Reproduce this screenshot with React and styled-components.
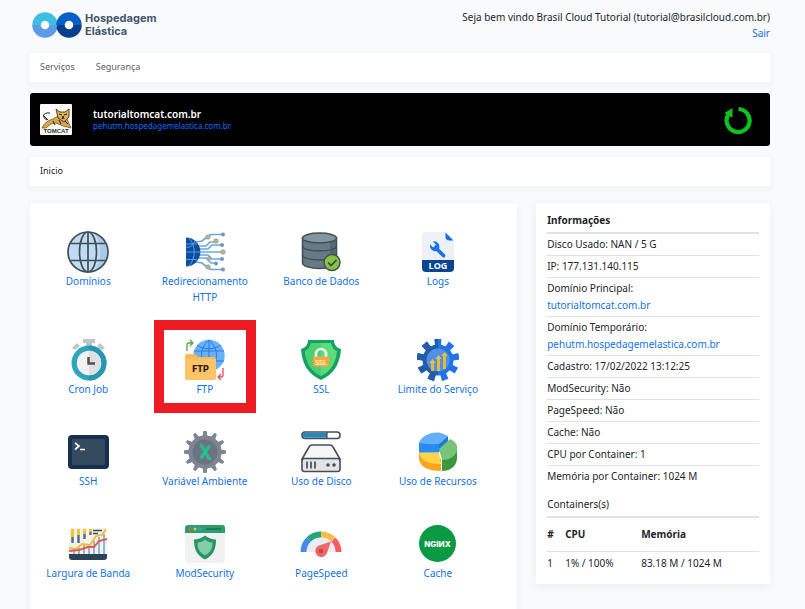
import React from 'react';
import styled, { createGlobalStyle } from 'styled-components';

const GlobalStyle = createGlobalStyle`
	* {
		box-sizing: border-box;
	}

	html {
		scrollbar-width: none;
	}

	body {
		margin: 0;
		background: #f8fafc;
		color: #212529;
		font-family: "Noto Sans", "Open Sans", sans-serif;
		font-size: 10px;
		line-height: 16px;
	}
`

const Page = styled.div`
	padding: 0 35px 0 30px;
`

const Header = styled.header`
	display: flex;
	justify-content: space-between;
	height: 53px;
	padding-top: 9px;
`

const Brand = styled.a`
	display: flex;
	gap: 3px;
	padding-left: 2px;
	color: #44566c;
	font-family: Inter, sans-serif;
	font-size: 11px;
	font-weight: 700;
	line-height: 13px;
	text-decoration: none;
`

const BrandName = styled.span`
	display: flex;
	flex-direction: column;
	padding-top: 3px;
`

const Welcome = styled.div`
	text-align: right;
`

const TextLink = styled.a`
	color: #1272e4;
	text-decoration: none;
`

const Bar = styled.nav`
	display: flex;
	align-items: center;
	gap: 21px;
	height: 29px;
	margin-bottom: 11px;
	padding: 0 10px 2px;
	background: #fff;
	border-radius: 2px;
	box-shadow: 0 2px 8px rgba(0, 0, 0, 0.05);
	font-size: 9px;
`

const BarLink = styled.a`
	color: ${props => props.$current ? '#212529' : '#5c6066'};
	text-decoration: none;
`

const SiteBar = styled.section`
	display: flex;
	align-items: center;
	height: 53px;
	margin-bottom: 11px;
	padding: 0 17px 0 10px;
	background: #000;
	border-radius: 3px;
`

const SiteNames = styled.div`
	display: flex;
	flex: 1;
	flex-direction: column;
	margin-left: 20px;
	line-height: 12px;
`

const SiteTitle = styled.strong`
	color: #fff;
	font-size: 10px;
	font-weight: 600;
`

const SiteLink = styled.a`
	color: #0a6cff;
	font-size: 8px;
	text-decoration: none;
`

const ReloadButton = styled.button`
	display: flex;
	padding: 0;
	border: 0;
	background: none;
	cursor: pointer;
`

const Columns = styled.main`
	display: grid;
	grid-template-columns: minmax(0, 25fr) minmax(0, 12fr);
	align-items: start;
	gap: 19px;
	padding-top: 6px;
`

const Card = styled.section`
	background: #fff;
	border-radius: 2px;
	box-shadow: 0 2px 8px rgba(0, 0, 0, 0.06);
`

const ToolGrid = styled(Card)`
	display: grid;
	grid-template-columns: repeat(4, minmax(0, 1fr));
	row-gap: 19px;
	padding: 19px 21px 38px 0;
`

const Tool = styled.a`
	position: relative;
	display: flex;
	flex-direction: column;
	align-items: center;
	padding: 9px 12px 6px;
	color: #1272e4;
	text-align: center;
	text-decoration: none;

	&::after {
		content: "";
		display: ${props => props.$marked ? 'block' : 'none'};
		position: absolute;
		inset: -10px 7px;
		border: 10px solid #ed1c24;
	}
`

const InfoCard = styled(Card)`
	padding: 9px 11px 10px;
`

const InfoTitle = styled.h2`
	margin: 0;
	padding-bottom: 4px;
	border-bottom: 2px solid #dee2e6;
	font-size: 10px;
	font-weight: ${props => props.$light ? 400 : 700};
`

const InfoList = styled.ul`
	margin: 0 0 9px;
	padding: 0;
	list-style: none;
`

const InfoRow = styled.li`
	padding: 2px 0 3px;
	border-bottom: 1px solid #dee2e6;

	&:last-child {
		border-bottom: 0;
	}
`

const InfoLink = styled(TextLink)`
	display: block;
	margin-top: 1px;
`

const Containers = styled.table`
	width: 100%;
	border-collapse: collapse;
	text-align: left;

	th {
		height: 33px;
		padding: 0;
		border-bottom: 1px solid #dee2e6;
		font-weight: 700;
	}

	td {
		height: 23px;
		padding: 0;
	}
`

const ColNumber = styled.col`
	width: 18px;
`

const ColCpu = styled.col`
	width: 76px;
`

const Icon = ({ children }) => (
	<svg width="42" height="42" viewBox="0 0 42 42" aria-hidden="true">{children}</svg>
)

// gear outline built from a number of teeth around the centre
const gearPath = (teeth, outer, inner, top, foot) => {
	const points = []
	for (let i = 0; i < teeth; i++) {
		const a = (i / teeth) * Math.PI * 2 - Math.PI / 2
		const add = (r, d) => points.push(`${(21 + r * Math.cos(a + d)).toFixed(2)},${(21 + r * Math.sin(a + d)).toFixed(2)}`)
		add(inner, -foot)
		add(outer, -top)
		add(outer, top)
		add(inner, foot)
	}
	return points.join(' ')
}

const GlobeIcon = () => (
	<Icon>
		<circle cx="21" cy="21" r="20" fill="#bfdcf5" />
		<path d="M27 2a20 20 0 0 1 0 38c8-9 9-27 0-38z" fill="#a4cbe9" />
		<g fill="none" stroke="#454d55" strokeWidth="1.7">
			<circle cx="21" cy="21" r="20" />
			<ellipse cx="21" cy="21" rx="8.5" ry="20" />
			<path d="M21 1v40M4 12.5h34M4 29.5h34" />
		</g>
	</Icon>
)

const RedirectIcon = () => (
	<Icon>
		<path d="M2 6.5a14.5 14.5 0 0 1 0 29z" fill="#0b4da2" />
		<path d="M2 13h11M2 21h14.5M2 28.5h11M5 7c7 8 7 20 0 28M2 16c4 1 7-1 9-7" fill="none" stroke="#5f9bdb" strokeWidth="1" />
		<path d="M12 11l6-1 5-4 4-2.5h12M15 15h7l4-4h6M16 18h8l4-4h9M17 21h22M16 24h8l4 4h9M15 27h7l5 5h5M12 31l6 1 5 4 4 2.5h12" fill="none" stroke="#6ba6e3" strokeWidth="1.7" />
		<g fill="#6c98c4">
			<circle cx="39" cy="3.5" r="2" /><circle cx="38" cy="14" r="2" /><circle cx="38" cy="28" r="2" />
			<circle cx="32" cy="32.5" r="2" /><circle cx="39" cy="38.5" r="2" />
		</g>
		<g fill="#d1b45c" stroke="#7c9fc0" strokeWidth=".8">
			<circle cx="24" cy="6" r="2.2" /><circle cx="32" cy="10" r="2.2" /><circle cx="39" cy="21" r="2.2" />
			<circle cx="24" cy="36" r="2.2" /><circle cx="25" cy="27.5" r="1.8" />
		</g>
	</Icon>
)

const DatabaseIcon = () => (
	<Icon>
		<path d="M2.5 7v25c0 3 7.5 5.5 17 5.5S36.5 35 36.5 32V7z" fill="#657986" stroke="#444e57" strokeWidth="1.5" />
		<path d="M30 11v24c4-1 6-2 6-4V8z" fill="#536773" />
		<ellipse cx="19.5" cy="7" rx="17" ry="5" fill="#8296a1" stroke="#444e57" strokeWidth="1.5" />
		<path d="M2.5 15c0 3 7.5 5 17 5s17-2 17-5M2.5 24c0 3 7.5 5 17 5s17-2 17-5" fill="none" stroke="#444e57" strokeWidth="1.5" />
		<circle cx="32" cy="31.5" r="8" fill="#84c441" stroke="#444e57" strokeWidth="1.5" />
		<path d="M28 31.5l3 3 5.5-5.5" fill="none" stroke="#39444e" strokeWidth="1.7" />
	</Icon>
)

const LogIcon = () => (
	<Icon>
		<path d="M9 1h19l9 9v19H5V5a4 4 0 0 1 4-4z" fill="#edf0f4" />
		<path d="M28.5 1.5l8 8h-4a4 4 0 0 1-4-4z" fill="#176ee5" />
		<path d="M5 29h32v8a4 4 0 0 1-4 4H9a4 4 0 0 1-4-4z" fill="#0b4591" />
		<path d="M16 10.5a5.2 5.2 0 0 1 6 7l6 6c1.5 2-1 4-2.6 2.5l-6-6a5.2 5.2 0 0 1-6.2-6.5l3 3 2.7-2.7z" fill="#1673ea" />
		<text x="21" y="38" fill="#fff" fontFamily="Open Sans, sans-serif" fontSize="9" fontWeight="700" textAnchor="middle">LOG</text>
	</Icon>
)

const ClockIcon = () => (
	<Icon>
		<path d="M16 0h12v4h-3v5h-6V4h-3zM5 9l5-5 3 3-5 4zM38 9l-5-5-3 3 5 4z" fill="#bfc4c9" />
		<circle cx="22" cy="24" r="17.5" fill="#2fa5bd" />
		<path d="M22 6.5a17.5 17.5 0 0 1 0 35z" fill="#2797b0" />
		<circle cx="22" cy="24" r="12.2" fill="#f0f2f4" />
		<path d="M22 11.8a12.2 12.2 0 0 1 0 24.4z" fill="#dde1e5" />
		<path d="M21.5 18v6.5H28" fill="none" stroke="#5c4b43" strokeWidth="2.5" />
	</Icon>
)

const FtpIcon = () => (
	<Icon>
		<circle cx="25" cy="16.5" r="15.7" fill="#67b1fb" />
		<path d="M25 1v31M10 12h30M10 22h30M25 1c-10 8-10 23 0 31M25 1c10 8 10 23 0 31M13 6c7 5 17 5 24 0" fill="none" stroke="#2c7bd7" strokeWidth="1" />
		<path d="M1 17q0-2 2-2h8l3 3h15q3 0 3 3v17q0 3-3 3H4q-3 0-3-3z" fill="#fdba59" />
		<path d="M1 20h31v18q0 3-3 3H4q-3 0-3-3z" fill="#ffc468" />
		<text x="16.5" y="32.5" fill="#26221c" fontFamily="Roboto, sans-serif" fontSize="9" fontWeight="900" textAnchor="middle">FTP</text>
		<path d="M3 12V6q0-2 2-2h3M6 1l3 3-3 3" fill="none" stroke="#5aa451" strokeWidth="1.3" />
		<path d="M39 29v7q0 2-2 2h-3M37 35l-3 3 3 3" fill="none" stroke="#dc5363" strokeWidth="1.3" />
	</Icon>
)

const SslIcon = () => (
	<Icon>
		<path d="M8 1h26c0 5 3 8 7 9-1 15-7 25-20 31C8 35 2 25 1 10c4-1 7-4 7-9z" fill="#15a163" />
		<path d="M11 4h20c1 4 3 7 6 8-1 12-6 20-16 25C11 32 6 24 5 12c3-1 5-4 6-8z" fill="#5ddc7b" />
		<path d="M11 4h10v33C11 32 6 24 5 12c3-1 5-4 6-8z" fill="#4bcf70" />
		<path d="M16 19v-4a5 5 0 0 1 10 0v4" fill="none" stroke="#f1fff4" strokeWidth="2.7" />
		<rect x="13" y="17.5" width="16" height="10" rx="1" fill="#f7a83c" />
		<text x="21" y="25.5" fill="#fff" fontFamily="Open Sans, sans-serif" fontSize="7" fontWeight="600" textAnchor="middle">SSL</text>
	</Icon>
)

const LimitIcon = () => (
	<Icon>
		<clipPath id="gear-left">
			<rect width="21" height="42" />
		</clipPath>
		<polygon points={gearPath(9, 21.5, 15, 0.16, 0.2)} fill="#2373e8" />
		<g clipPath="url(#gear-left)">
			<polygon points={gearPath(9, 21.5, 15, 0.16, 0.2)} fill="#245bab" />
		</g>
		<path d="M21 5.5a15.5 15.5 0 0 1 0 31z" fill="#2373e8" />
		<path d="M21 5.5a15.5 15.5 0 0 0 0 31z" fill="#245bab" />
		<circle cx="21" cy="21" r="11.5" fill="#4f91e6" />
		<path d="M15.5 32v-9M21.5 32V19M27.5 30V15" stroke="#e5b93a" strokeWidth="3" />
		<path d="M12.5 24l3-4 3 4zM18.5 20l3-4 3 4zM24.5 17l3-4 3 4z" fill="#f3c534" />
	</Icon>
)

const TerminalIcon = () => (
	<Icon>
		<rect y="4" x="1" width="41" height="34" rx="4" fill="#17304f" />
		<rect x="5" y="8" width="33" height="26" rx="1" fill="#35495f" />
		<path d="M8 12l4 3-4 3.5M13 18.5h5" fill="none" stroke="#fff" strokeWidth="1.7" />
	</Icon>
)

const VariableIcon = () => (
	<Icon>
		<polygon points={gearPath(12, 21, 16, 0.05, 0.12)} fill="#7d8493" stroke="#7d8493" strokeLinejoin="round" />
		<circle cx="21" cy="21" r="16.5" fill="#7d8493" />
		<circle cx="21" cy="21" r="12.5" fill="#6c7482" />
		<path d="M16 14.5h1.5l7.5 13h2M25.5 14.5l-9 13" fill="none" stroke="#25be8f" strokeWidth="3.2" />
	</Icon>
)

const DiskIcon = () => (
	<Icon>
		<rect x="2" y="1" width="38" height="6.5" rx="3" fill="#fff" stroke="#484e54" strokeWidth="1.6" />
		<path d="M27 1.8H5a2.2 2.2 0 0 0 0 4.9h22z" fill="#2986bd" />
		<path d="M27 1v6" stroke="#484e54" strokeWidth="1.2" />
		<path d="M12 14h18q2 0 3 2l7 12H2l7-12q1-2 3-2z" fill="#f5f6f7" stroke="#484e54" strokeWidth="1.6" />
		<rect x="2" y="27.5" width="38" height="13" rx="2.5" fill="#e2e5e8" stroke="#484e54" strokeWidth="1.6" />
		<path d="M7 30.5v7M11 30.5v7M15 30.5v7" stroke="#484e54" strokeWidth="1.7" />
		<circle cx="28" cy="34" r="1.8" fill="#484e54" /><circle cx="34" cy="34" r="1.8" fill="#484e54" />
	</Icon>
)

const PieIcon = () => (
	<Icon>
		<path d="M2 22v6c1 8 9 12 22 12V28z" fill="#fba51c" />
		<path d="M2 21l20 1 2 11C12 33 3 30 2 21z" fill="#ffd447" />
		<path d="M2 12C4 5 15 0 24 2l7 3-9 8z" fill="#62b0fa" />
		<path d="M2 12l20 1v8.500H2z" fill="#2a8cf0" />
		<path d="M22 13l9-8v7l-9 9z" fill="#1d78d8" />
		<path d="M25 27c8 0 14-3 15-9v10c-1 8-7 12-15 12z" fill="#3c963f" />
		<path d="M22 18L33 8c7 3 8 8 7 11-2 7-8 10-15 10z" fill="#79c47b" />
	</Icon>
)

const BandwidthIcon = () => (
	<Icon>
		<rect x="2" y="5" width="38" height="31" rx="3" fill="#f3f2ec" />
		<path d="M5.5 6v8M11.5 6v6M17.5 6v5M23.5 6v3" stroke="#f2c52e" strokeWidth="3" />
		<path d="M5.5 14v6M11.5 12v8M17.5 11v5M23.5 9v3" stroke="#51708e" strokeWidth="2.5" />
		<path d="M26 7.5h9M26 10.5h5" stroke="#34495e" strokeWidth="1.6" />
		<path d="M7 26v6M12 25v7M17 22v10M22 22v10M27 18v14M32 14v18M37 11v21" stroke="#79a9c7" strokeWidth="1.6" />
		<path d="M2 31h38v3q0 3-3 3H5q-3 0-3-3z" fill="#2c4257" />
		<path d="M2 25l7 1 6-5 8 1 6-9 6-1 4-6" fill="none" stroke="#efbf2d" strokeWidth="1.9" />
		<path d="M2 28l10-1 9-3h6l5-6 8-2" fill="none" stroke="#e35757" strokeWidth="1.9" />
	</Icon>
)

const ModSecurityIcon = () => (
	<Icon>
		<rect x="1" y="2" width="40" height="38" rx="3" fill="#f0f1f1" />
		<path d="M4 2h34q3 0 3 3v5H1V5q0-3 3-3z" fill="#2ba06e" />
		<circle cx="6" cy="6" r="1.5" fill="#ea5a51" /><circle cx="11" cy="6" r="1.5" fill="#f4c23c" /><circle cx="16" cy="6" r="1.5" fill="#4d9bd5" />
		<path d="M22 6h15" stroke="#187b53" strokeWidth="1.8" />
		<path d="M21 12.5q5 4 11 4c0 10-3 16-11 20-8-4-11-10-11-20q6 0 11-4z" fill="#279664" />
		<path d="M21 16.5q3 3 7.5 3c0 6-2 10-7.5 13-5.5-3-7.5-7-7.5-13q4.5 0 7.5-3z" fill="#86ccaa" />
	</Icon>
)

const SpeedIcon = () => (
	<Icon>
		<path d="M7 29a14 14 0 0 1 28 0z" fill="#e7ecf6" />
		<g fill="none" strokeWidth="6">
			<path d="M3.5 29A17.5 17.5 0 0 1 8.6 16.6" stroke="#4788ec" />
			<path d="M8.6 16.6A17.5 17.5 0 0 1 21 11.5" stroke="#25a678" />
			<path d="M21 11.5a17.5 17.5 0 0 1 12.4 5.1" stroke="#f4bd49" />
			<path d="M33.4 16.6A17.5 17.5 0 0 1 38.5 29" stroke="#f15f61" />
		</g>
		<path d="M31 18.5l-4 11.5a6 6 0 1 1-8-7.5z" fill="#ef6666" />
		<circle cx="21" cy="28" r="2.3" fill="#ca4148" />
	</Icon>
)

const NginxIcon = () => (
	<Icon>
		<circle cx="20.5" cy="20.5" r="18.5" fill="#0a9a43" />
		<text x="20.5" y="23.5" fill="#fff" fontFamily="Inter, sans-serif" fontSize="8" fontWeight="800" textAnchor="middle">NGIИX</text>
	</Icon>
)

const BrandLogo = () => (
	<svg width="50" height="32" viewBox="0 0 50 32" aria-hidden="true">
		<g fill="none" strokeWidth="8.5">
			<path d="M4.5 16a8.5 8.5 0 0 1 17 0" stroke="#3ebde5" />
			<path d="M4.5 16a8.5 8.5 0 0 0 17 0" stroke="#5b9be7" />
			<path d="M28.5 16a8.5 8.5 0 0 1 17 0" stroke="#0660c7" />
			<path d="M28.5 16a8.5 8.5 0 0 0 17 0" stroke="#063f8d" />
		</g>
		<path d="M25 12.5l3-5 3 5-2.5 3.5H24z" fill="#0660c7" />
		<path d="M17.5 16h8L22 24l-5-3z" fill="#5b9be7" />
	</svg>
)

const TomcatLogo = () => (
	<svg width="33" height="33" viewBox="0 0 33 33" aria-hidden="true">
		<rect x="0" y="1" width="32" height="31" rx="1" fill="#fbfbf8" />
		<path d="M2 25q3-7 11-9l5-3 9 3 4 9-8-2-7-3-5 1-5 4z" fill="#dda54b" stroke="#4c3415" strokeWidth=".6" />
		<path d="M16 6l4 3h5l4-3v8l-5 5-6-4z" fill="#d9b25c" stroke="#49351a" strokeWidth=".9" />
		<path d="M19 11l3 1M27 11l-3 1M22 16l1-3 1 3M10 10c-8-1-8 5-3 7M3 12l5 5M13 18l2 4M19 17l2 4M25 18l3 3" fill="none" stroke="#27231d" strokeWidth="1" />
		<text x="16" y="30" fill="#333" fontFamily="Liberation Sans, sans-serif" fontSize="6" fontWeight="700" textAnchor="middle">TOMCAT</text>
	</svg>
)

const ReloadIcon = () => (
	<svg width="30" height="30" viewBox="0 0 30 30" aria-hidden="true">
		<path d="M15.5 4A11.5 11.5 0 1 1 5 10" fill="none" stroke="#0bc51d" strokeWidth="4.2" />
		<path d="M1.5 8L9.5 3v9H8z" fill="#0bc51d" />
	</svg>
)

const tools = [
	{ label: 'Domínios', icon: GlobeIcon },
	{ label: 'Redirecionamento HTTP', icon: RedirectIcon },
	{ label: 'Banco de Dados', icon: DatabaseIcon },
	{ label: 'Logs', icon: LogIcon },
	{ label: 'Cron Job', icon: ClockIcon },
	{ label: 'FTP', icon: FtpIcon, marked: true },
	{ label: 'SSL', icon: SslIcon },
	{ label: 'Limite do Serviço', icon: LimitIcon },
	{ label: 'SSH', icon: TerminalIcon },
	{ label: 'Variável Ambiente', icon: VariableIcon },
	{ label: 'Uso de Disco', icon: DiskIcon },
	{ label: 'Uso de Recursos', icon: PieIcon },
	{ label: 'Largura de Banda', icon: BandwidthIcon },
	{ label: 'ModSecurity', icon: ModSecurityIcon },
	{ label: 'PageSpeed', icon: SpeedIcon },
	{ label: 'Cache', icon: NginxIcon },
]

const info = [
	{ text: 'Disco Usado: NAN / 5 G' },
	{ text: 'IP: 177.131.140.115' },
	{ text: 'Domínio Principal:', link: 'tutorialtomcat.com.br' },
	{ text: 'Domínio Temporário:', link: 'pehutm.hospedagemelastica.com.br' },
	{ text: 'Cadastro: 17/02/2022 13:12:25' },
	{ text: 'ModSecurity: Não' },
	{ text: 'PageSpeed: Não' },
	{ text: 'Cache: Não' },
	{ text: 'CPU por Container: 1' },
	{ text: 'Memória por Container: 1024 M' },
]

const App = () => {
	return (
		<>
			<GlobalStyle />
			<Page>
				<Header>
					<Brand href="#">
						<BrandLogo />
						<BrandName>
							<span>Hospedagem</span>
							<span>Elástica</span>
						</BrandName>
					</Brand>
					<Welcome>
						<div>Seja bem vindo Brasil Cloud Tutorial (tutorial@brasilcloud.com.br)</div>
						<TextLink href="#">Sair</TextLink>
					</Welcome>
				</Header>

				<Bar>
					<BarLink href="#">Serviços</BarLink>
					<BarLink href="#">Segurança</BarLink>
				</Bar>

				<SiteBar>
					<TomcatLogo />
					<SiteNames>
						<SiteTitle>tutorialtomcat.com.br</SiteTitle>
						<SiteLink href="#">pehutm.hospedagemelastica.com.br</SiteLink>
					</SiteNames>
					<ReloadButton type="button" aria-label="Reiniciar">
						<ReloadIcon />
					</ReloadButton>
				</SiteBar>

				<Bar>
					<BarLink href="#" $current>Inicio</BarLink>
				</Bar>

				<Columns>
					<ToolGrid>
						{tools.map(({ label, icon: ToolIcon, marked }) => (
							<Tool key={label} href="#" $marked={marked}>
								<ToolIcon />
								{label}
							</Tool>
						))}
					</ToolGrid>

					<InfoCard>
						<InfoTitle>Informações</InfoTitle>
						<InfoList>
							{info.map(({ text, link }) => (
								<InfoRow key={text}>
									{text}
									{link && <InfoLink href="#">{link}</InfoLink>}
								</InfoRow>
							))}
						</InfoList>
						<InfoTitle $light>Containers(s)</InfoTitle>
						<Containers>
							<colgroup>
								<ColNumber />
								<ColCpu />
								<col />
							</colgroup>
							<thead>
								<tr>
									<th>#</th>
									<th>CPU</th>
									<th>Memória</th>
								</tr>
							</thead>
							<tbody>
								<tr>
									<td>1</td>
									<td>1% / 100%</td>
									<td>83.18 M / 1024 M</td>
								</tr>
							</tbody>
						</Containers>
					</InfoCard>
				</Columns>
			</Page>
		</>
	)
}

export default App;
